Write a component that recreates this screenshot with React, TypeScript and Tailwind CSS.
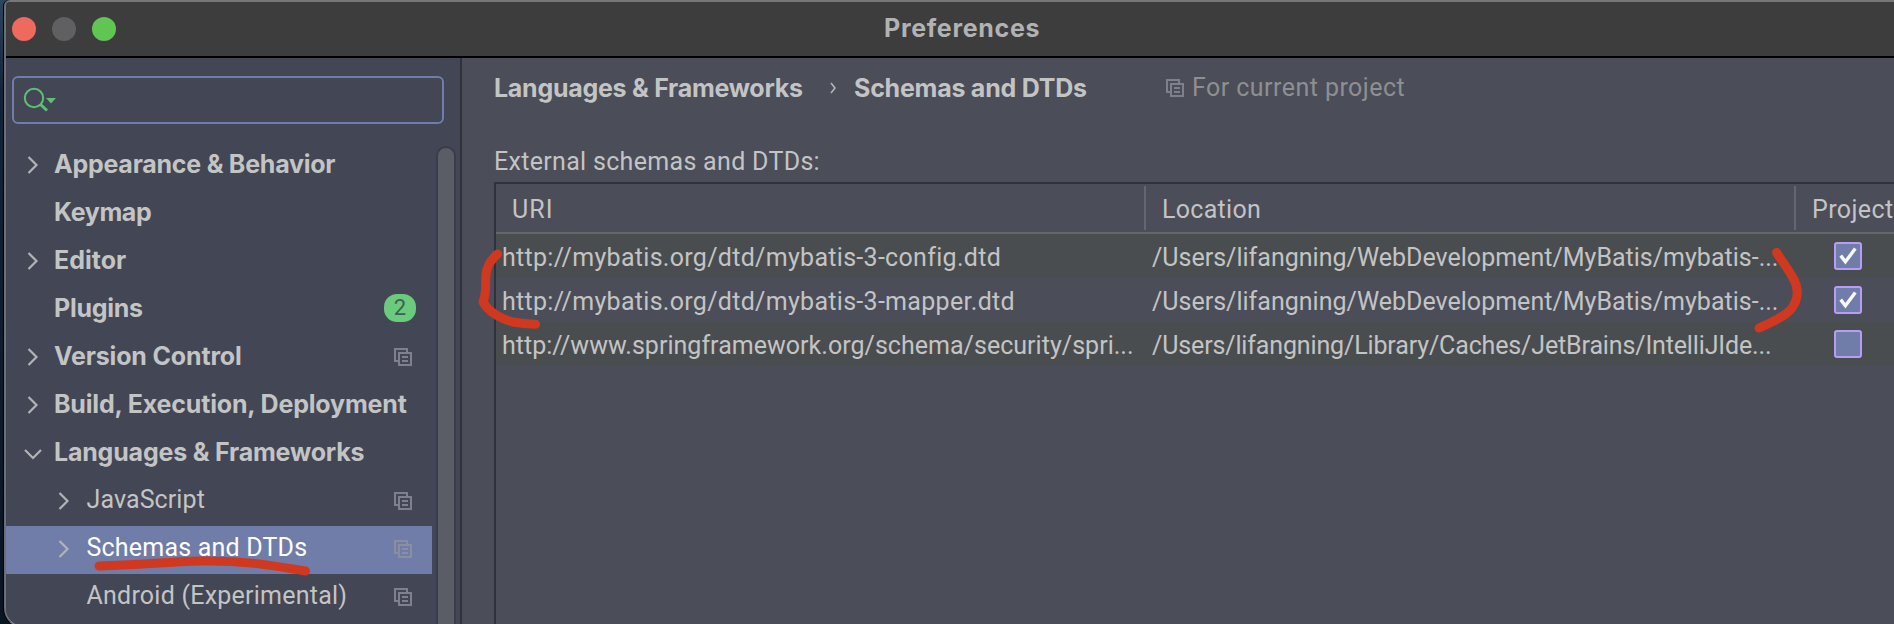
import React from "react";
import clsx from "clsx";

const CopyIcon = ({ className }: { className?: string }) => (
  <svg width="18" height="18" viewBox="0 0 18 18" fill="none" stroke="currentColor" strokeWidth="2" className={className}>
    <path d="M4 13H1V1H13V4" />
    <rect x="5" y="5" width="12" height="12" />
    <path d="M8 9H14M8 13H14" />
  </svg>
);

const Chevron = ({ open }: { open?: boolean }) => (
  <svg width="18" height="18" viewBox="0 0 18 18" fill="none" stroke="#b2b3b6" strokeWidth="2.2">
    <path d={open ? "M1 6L9 14L17 6" : "M4.5 1L12.5 9L4.5 17"} />
  </svg>
);

type Item = {
  label: string;
  child?: boolean;
  arrow?: "closed" | "open";
  copy?: boolean;
  badge?: string;
  selected?: boolean;
  spacing: string;
};

const items: Item[] = [
  { label: "Appearance & Behavior", arrow: "closed", spacing: "tracking-[-0.24px]" },
  { label: "Keymap", spacing: "tracking-[-0.36px]" },
  { label: "Editor", arrow: "closed", spacing: "tracking-[0px]" },
  { label: "Plugins", badge: "2", spacing: "tracking-[-0.28px]" },
  { label: "Version Control", arrow: "closed", copy: true, spacing: "tracking-[-0.16px]" },
  { label: "Build, Execution, Deployment", arrow: "closed", spacing: "tracking-[-0.17px]" },
  { label: "Languages & Frameworks", arrow: "open", spacing: "tracking-[-0.2px]" },
  { label: "JavaScript", child: true, arrow: "closed", copy: true, spacing: "tracking-[0.1px]" },
  { label: "Schemas and DTDs", child: true, arrow: "closed", copy: true, selected: true, spacing: "tracking-[0.2px]" },
  { label: "Android (Experimental)", child: true, copy: true, spacing: "tracking-[0.23px]" },
];

const rows = [
  {
    uri: "http://mybatis.org/dtd/mybatis-3-config.dtd",
    uriSpacing: "tracking-[0.3px]",
    location: "/Users/lifangning/WebDevelopment/MyBatis/mybatis-...",
    locSpacing: "tracking-[0.01px]",
    checked: true,
  },
  {
    uri: "http://mybatis.org/dtd/mybatis-3-mapper.dtd",
    uriSpacing: "tracking-[0.3px]",
    location: "/Users/lifangning/WebDevelopment/MyBatis/mybatis-...",
    locSpacing: "tracking-[0.01px]",
    checked: true,
  },
  {
    uri: "http://www.springframework.org/schema/security/spri...",
    uriSpacing: "tracking-[0.03px]",
    location: "/Users/lifangning/Library/Caches/JetBrains/IntelliJIde...",
    locSpacing: "tracking-[-0.14px]",
    checked: false,
  },
];

function SidebarRow({ item }: { item: Item }) {
  return (
    <div className={clsx("flex h-12 w-[428px] items-center pr-5", item.child ? "pl-[51px]" : "pl-5", item.selected && "bg-[#707da8]")}>
      <span className="mb-[2px] w-[31px] shrink-0">{item.arrow && <Chevron open={item.arrow === "open"} />}</span>
      <span
        className={clsx(
          "flex-1 pb-[5px]",
          item.spacing,
          item.child ? "ml-[0.5px]" : "ml-[-1px] font-[Inter,sans-serif] font-bold",
          item.selected && "text-white",
        )}
      >
        {item.label}
      </span>
      {item.badge && (
        <span className="mr-[-4px] mb-1 flex h-7 w-8 items-center justify-center rounded-[13px] bg-[#69cb7b] text-[22px] text-[#3f5f57]">{item.badge}</span>
      )}
      {item.copy && <CopyIcon className={clsx("mb-[2px]", item.selected ? "text-[#8b8e9f]" : "text-[#7e818d]")} />}
    </div>
  );
}

function Checkbox({ checked }: { checked: boolean }) {
  return (
    <span className="flex size-7 items-center justify-center rounded-[3px] border-2 border-[#b99cf5] bg-[#707da8]">
      {checked && (
        <svg width="24" height="24" viewBox="0 0 24 24" fill="none" stroke="#f7f7f5" strokeWidth="3.4">
          <path d="M4.7 11.6L9.4 17.8L19.3 4.6" />
        </svg>
      )}
    </span>
  );
}

export default function App() {
  return (
    <div className="relative h-[624px] w-[1894px] overflow-hidden bg-linear-to-b from-[#2b465f] via-[#12243a] via-15% to-[#081522] pl-[3px] font-[Roboto,sans-serif] text-[25px] leading-[30px] whitespace-nowrap text-[#c3c4c4]">
      <div className="h-[628px] w-[1900px] rounded-tl-[6px] rounded-bl-[20px] bg-black pl-px">
        <div className="flex h-full flex-col overflow-hidden rounded-tl-[6px] rounded-bl-[20px] border-t-2 border-b-2 border-l-2 border-t-[#77777a] border-b-[#777a86] border-l-[#6c6e78] bg-[#4b4d58]">
          <header className="flex h-14 shrink-0 items-center border-b-2 border-black bg-[#3d3d3d]">
            <div className="mb-px flex w-[879px] shrink-0 gap-4 pl-[6px]">
              <span className="size-6 rounded-full bg-[#ee6a5f]" />
              <span className="size-6 rounded-full bg-[#606062]" />
              <span className="size-6 rounded-full bg-[#61c554]" />
            </div>
            <h1 className="ml-[-1px] pb-[3px] font-[Inter,sans-serif] font-bold tracking-[0.69px] text-[#b2b2b3]">Preferences</h1>
          </header>

          <div className="flex min-h-0 flex-1">
            <aside className="ml-[-2px] flex w-[458px] shrink-0 flex-col border-r-2 border-[#2f313d] bg-[#434654]">
              <div className="mt-[18px] ml-2 flex h-12 w-[432px] shrink-0 items-center rounded-[6px] border-2 border-[#707da8] pl-2">
                <svg width="36" height="28" viewBox="0 0 36 28" fill="none" stroke="#5fbf74" strokeWidth="2">
                  <circle cx="12" cy="12" r="9.2" />
                  <path d="M18.5 18.5L25 24.5" strokeWidth="3" />
                  <path d="M24 12H34L29 17.5Z" fill="#5fbf74" stroke="none" />
                </svg>
              </div>
              <div className="mt-[18px] flex min-h-0 flex-1">
                <nav className="w-[432px] shrink-0">
                  {items.map((item) => (
                    <SidebarRow key={item.label} item={item} />
                  ))}
                </nav>
                <div className="mt-[4px] h-[600px] w-5 shrink-0 rounded-t-[10px] border-2 border-[#3a3c49] bg-[#5a5d65]" />
              </div>
            </aside>

            <main className="flex min-w-0 flex-1 flex-col pl-8">
              <div className="mt-[15px] flex h-[30px] items-center font-[Inter,sans-serif] font-bold">
                <span className="w-[336px] tracking-[-0.27px]">Languages &amp; Frameworks</span>
                <svg width="6" height="12" viewBox="0 0 6 12" fill="none" stroke="#b5b6ba" strokeWidth="1.6">
                  <path d="M1 1L5 6L1 11" />
                </svg>
                <span className="w-[330px] pl-[18px] tracking-[-0.24px]">Schemas and DTDs</span>
                <CopyIcon className="text-[#7e818d]" />
                <span className="pl-2 font-[Roboto,sans-serif] font-normal tracking-[0.45px] text-[#8e8f92]">For current project</span>
              </div>
              <p className="mt-11 tracking-[0.31px]">External schemas and DTDs:</p>

              <section className="mt-[5px] flex flex-1 flex-col border-t-2 border-l-2 border-[#2f313e]">
                <div className="flex h-[50px] items-center border-b-2 border-[#65666e]">
                  <span className="flex h-11 w-[650px] items-center border-r-2 border-[#65666e] pt-[3px] pl-4 tracking-[1.1px]">URI</span>
                  <span className="flex h-11 w-[650px] items-center border-r-2 border-[#65666e] pt-[3px] pl-4 tracking-[0.3px]">Location</span>
                  <span className="pt-[3px] pl-4 tracking-[0.4px]">Project</span>
                </div>
                {rows.map((row, i) => (
                  <div key={row.uri} className={clsx("flex h-11 items-center", i % 2 === 0 && "bg-[#4a4d4f]")}>
                    <span className={clsx("w-[650px] pt-1 pl-[6px]", row.uriSpacing)}>{row.uri}</span>
                    <span className={clsx("w-[688px] pt-1 pl-[6px]", row.locSpacing)}>{row.location}</span>
                    <Checkbox checked={row.checked} />
                  </div>
                ))}
              </section>
            </main>
          </div>
        </div>
      </div>

      <svg className="pointer-events-none absolute inset-0" width="1894" height="624" fill="none" stroke="#d0391f" strokeWidth="9" strokeLinecap="round" strokeLinejoin="round">
        <path d="M497.5 254Q487 263 486 274C485 286 487 292 483 302C489 313 504 320 513 322Q524 324 535.5 324.3" />
        <path d="M1776.5 252.5C1782 261 1788 269 1792.500 277C1799 288 1799 298 1792 308C1785 317 1770 323 1759 328" />
        <path d="M99 566C140 565 165 562 200 561C240 560 270 565 305.500 571" />
      </svg>
    </div>
  );
}
